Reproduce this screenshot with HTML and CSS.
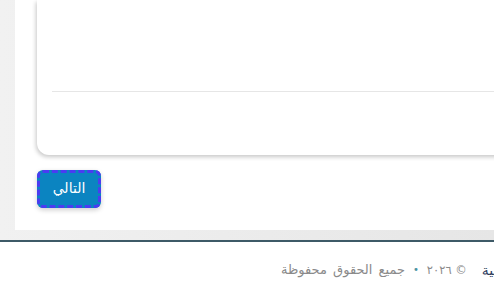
FILE: index.html
```html
<!DOCTYPE html>
<html lang="ar">
<head>
<meta charset="utf-8">
<link rel="stylesheet" href="styles.css">
</head>
<body>
<div class="shell">
  <main class="panel">
    <section class="card">
      <div class="card-body"></div>
      <hr class="sep">
      <div class="card-foot"></div>
    </section>
    <div class="actions">
      <button class="btn-next" type="button">التالي</button>
    </div>
  </main>
</div>
<footer class="site-footer">
  <a class="lang" href="#">العربية</a>
  <span class="copy">© ٢٠٢٦</span>
  <span class="dot">•</span>
  <span class="rights">جميع الحقوق محفوظة</span>
</footer>
</body>
</html>
```
FILE: styles.css
```css
html, body {
  margin: 0;
  padding: 0;
  background: #ffffff;
  overflow: hidden;
  width: 494px;
  height: 295px;
  font-family: "DejaVu Sans", "Noto Sans", sans-serif;
}
.shell {
  background: linear-gradient(90deg, #f1f1f1 0%, #e6e6e6 100%);
  padding: 0 0 10px 15px;
  border-bottom: 2px solid #3e5a67;
}
.panel {
  background: #ffffff;
  height: 230px;
  padding-left: 22px;
  box-sizing: border-box;
  display: flex;
  flex-direction: column;
}
.card {
  background: #ffffff;
  height: 155px;
  margin-right: -40px;
  border-radius: 0 0 0 12px;
  box-shadow: -1px 2px 4px rgba(0, 0, 0, 0.22);
  padding-left: 15px;
  box-sizing: border-box;
  display: flex;
  flex-direction: column;
}
.card-body {
  height: 91px;
}
.sep {
  margin: 0;
  border: 0;
  border-top: 1px solid #e6e6e6;
}
.actions {
  margin-top: 15px;
}
.btn-next {
  width: 64px;
  height: 38px;
  background: #0b84c1;
  color: #ffffff;
  border: 0;
  border-radius: 6px;
  outline: 3px dashed #4a3cf2;
  outline-offset: -3px;
  font-family: "DejaVu Sans", sans-serif;
  font-size: 14px;
  box-shadow: 0 2px 5px rgba(0, 0, 0, 0.2);
  padding: 0 0 2px;
}
.site-footer {
  direction: rtl;
  display: flex;
  align-items: center;
  height: 53px;
  padding-top: 2px;
  box-sizing: border-box;
  font-size: 12px;
  color: #8a8a8a;
}
.lang {
  color: #2c3d5e;
  text-decoration: none;
  font-size: 14px;
  margin-right: -26px;
  margin-left: 15px;
}
.copy {
  font-size: 11.5px;
}
.dot {
  color: #4a93a3;
  margin: 0 8px;
  font-size: 10px;
}
.rights {
  font-size: 13px;
  word-spacing: 2px;
  color: #8a8a8a;
}
```
